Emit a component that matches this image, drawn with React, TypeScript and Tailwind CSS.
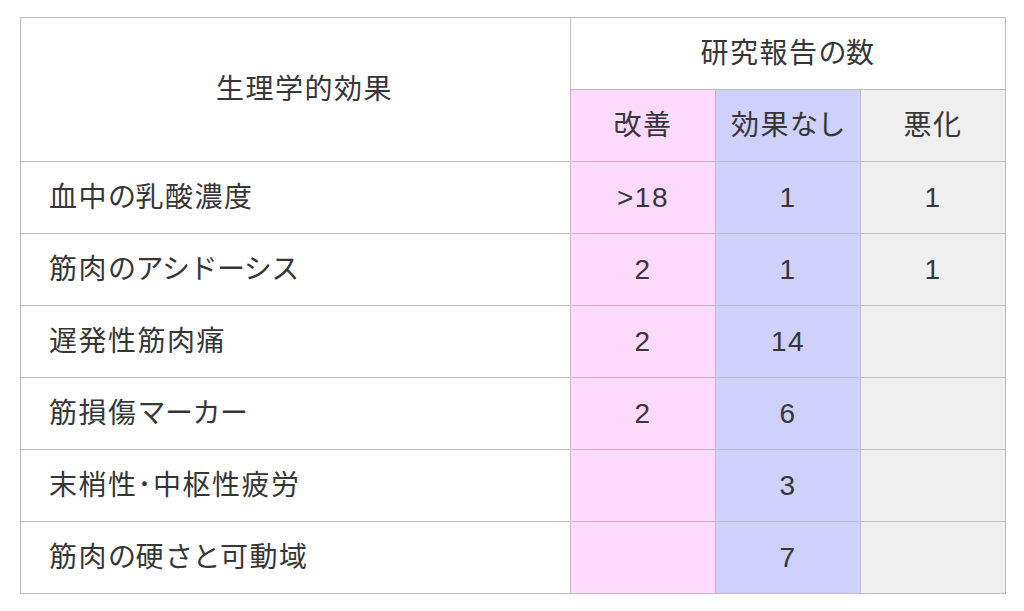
import React from "react";

const rows: { label: string; a: string; b: string; c: string }[] = [
  { label: "血中の乳酸濃度", a: ">18", b: "1", c: "1" },
  { label: "筋肉のアシドーシス", a: "2", b: "1", c: "1" },
  { label: "遅発性筋肉痛", a: "2", b: "14", c: "" },
  { label: "筋損傷マーカー", a: "2", b: "6", c: "" },
  { label: "末梢性･中枢性疲労", a: "", b: "3", c: "" },
  { label: "筋肉の硬さと可動域", a: "", b: "7", c: "" },
];

function JText({ text }: { text: string }) {
  const parts = text.split(/([\u3040-\u30ff]+)/).filter((p) => p.length > 0);
  return (
    <span>
      {parts.map((p, i) =>
        /^[\u3040-\u30ff]+$/.test(p) ? (
          <span key={i} className="tracking-[-0.5px]">
            {p}
          </span>
        ) : (
          <span key={i} className="tracking-[1.5px]">
            {p}
          </span>
        )
      )}
    </span>
  );
}

const cell = "border-r border-b border-[#bdbdbd] flex items-center";

export default function App() {
  return (
    <div
      className="w-[1024px] h-[611px] bg-white pt-[17px] pl-[20px] text-[#363636] text-[28px] leading-none"
      style={{ fontFamily: '"Liberation Sans", "Noto Sans CJK JP", sans-serif' }}
    >
      <div className="grid grid-cols-[550px_145px_145px_145px] grid-rows-[72px_72px_repeat(6,72px)] w-[986px] border-l border-t border-[#bdbdbd]">
        <div className={`${cell} row-span-2 justify-center pl-[18px] bg-white`}>
          <JText text="生理学的効果" />
        </div>
        <div className={`${cell} col-span-3 justify-center bg-white`}>
          <JText text="研究報告の数" />
        </div>
        <div className={`${cell} justify-center bg-[#fdd9fd]`}>
          <JText text="改善" />
        </div>
        <div className={`${cell} justify-center bg-[#cfd0fc]`}>
          <JText text="効果なし" />
        </div>
        <div className={`${cell} justify-center bg-[#efefef]`}>
          <JText text="悪化" />
        </div>
        {rows.map((r) => (
          <React.Fragment key={r.label}>
            <div className={`${cell} pl-[28px] bg-white`}>
              <JText text={r.label} />
            </div>
            <div className={`${cell} justify-center bg-[#fdd9fd] tracking-[1.5px]`}>{r.a}</div>
            <div className={`${cell} justify-center bg-[#cfd0fc] tracking-[1.5px]`}>{r.b}</div>
            <div className={`${cell} justify-center bg-[#efefef] tracking-[1.5px]`}>{r.c}</div>
          </React.Fragment>
        ))}
      </div>
    </div>
  );
}
